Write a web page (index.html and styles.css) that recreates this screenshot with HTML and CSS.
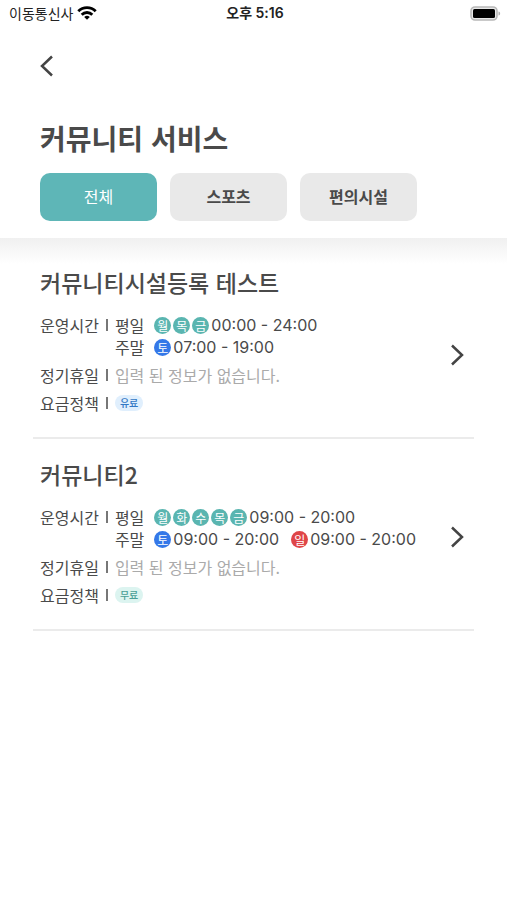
FILE: index.html
```html
<!DOCTYPE html>
<html lang="ko">
<head>
<meta charset="utf-8">
<meta name="viewport" content="width=device-width, initial-scale=1">
<title>커뮤니티 서비스</title>
<link rel="stylesheet" href="styles.css">
</head>
<body>
<div class="status">
  <div class="carrier">
    <span>이동통신사</span>
    <svg width="20" height="14" viewBox="0 0 20 14" aria-hidden="true">
      <g fill="none" stroke="#000" stroke-width="2.8">
        <path d="M1.300 5.200a12.300 12.300 0 0 1 17.400 0"/>
        <path d="M4.700 8.700a7.500 7.500 0 0 1 10.600 0"/>
      </g>
      <path d="M7.200 11a4.100 4.100 0 0 1 5.600 0L10 13.800z"/>
    </svg>
  </div>
  <div class="clock">오후 5:16</div>
  <svg class="battery" width="31" height="15" viewBox="0 0 31 15" aria-hidden="true">
    <rect x="1" y="1" width="26" height="13" rx="4" fill="#e8e8e8" stroke="#b8b8b8" stroke-width="1.600"/>
    <rect x="3" y="3" width="22" height="9" rx="1.500"/>
    <path d="M28.500 5.500c2.200.6 2.200 3.400 0 4z" fill="#b0b0b0"/>
  </svg>
</div>

<header class="header">
  <button class="back" type="button" aria-label="뒤로">
    <svg width="14" height="22" viewBox="0 0 14 22" aria-hidden="true"><path d="M12 1.500 2 11l10 9.500"/></svg>
  </button>
  <h1>커뮤니티 서비스</h1>
  <nav class="tabs">
    <button class="tab active" type="button">전체</button>
    <button class="tab" type="button">스포츠</button>
    <button class="tab" type="button">편의시설</button>
  </nav>
</header>

<main class="list">
  <article class="card">
    <div class="info">
      <h2>커뮤니티시설등록 테스트</h2>
      <dl>
        <dt>운영시간</dt>
        <dd>
          <div class="line"><span class="kind">평일</span><i class="day">월</i><i class="day">목</i><i class="day">금</i><span class="time">00:00 - 24:00</span></div>
          <div class="line"><span class="kind">주말</span><i class="day sat">토</i><span class="time">07:00 - 19:00</span></div>
        </dd>
        <dt>정기휴일</dt>
        <dd class="empty">입력 된 정보가 없습니다.</dd>
        <dt>요금정책</dt>
        <dd class="line"><span class="fee paid">유료</span></dd>
      </dl>
    </div>
    <a class="more first" href="#" aria-label="커뮤니티시설등록 테스트">
      <svg width="14" height="22" viewBox="0 0 14 22" aria-hidden="true"><path d="m2 1.500 10 9.500-10 9.500"/></svg>
    </a>
  </article>

  <article class="card">
    <div class="info">
      <h2>커뮤니티2</h2>
      <dl>
        <dt>운영시간</dt>
        <dd>
          <div class="line"><span class="kind">평일</span><i class="day">월</i><i class="day">화</i><i class="day">수</i><i class="day">목</i><i class="day">금</i><span class="time">09:00 - 20:00</span></div>
          <div class="line"><span class="kind">주말</span><i class="day sat">토</i><span class="time">09:00 - 20:00</span><i class="day sun">일</i><span class="time">09:00 - 20:00</span></div>
        </dd>
        <dt>정기휴일</dt>
        <dd class="empty">입력 된 정보가 없습니다.</dd>
        <dt>요금정책</dt>
        <dd class="line"><span class="fee free">무료</span></dd>
      </dl>
    </div>
    <a class="more" href="#" aria-label="커뮤니티2">
      <svg width="14" height="22" viewBox="0 0 14 22" aria-hidden="true"><path d="m2 1.500 10 9.500-10 9.500"/></svg>
    </a>
  </article>
</main>
</body>
</html>
```
FILE: styles.css
```css
* { box-sizing: border-box; }

body {
  margin: 0;
  background: #fff;
  color: #4a4a4a;
  font-family: "Noto Sans CJK KR", sans-serif;
  font-size: 16px;
  line-height: 22px;
}

h1, h2, dl, dd { margin: 0; }

button { font: inherit; color: inherit; border: 0; cursor: pointer; }

svg { display: block; }

.status {
  display: grid;
  grid-template-columns: 1fr auto 1fr;
  align-items: center;
  height: 26px;
  padding: 0 6px 0 9px;
  color: #222;
  font-size: 14px;
}

.carrier { display: flex; align-items: center; gap: 4px; }

.clock { font-family: Inter, "Noto Sans CJK KR", sans-serif; font-weight: 600; }

.battery { justify-self: end; }

.header { padding: 29px 40px 17px; }

.back { display: block; padding: 0; background: none; }

.back path, .more path { fill: none; stroke: #444; stroke-width: 2.5; }

h1 {
  margin: 40px 0 14px;
  font-size: 28px;
  line-height: 42px;
  font-weight: 700;
}

.tabs { display: flex; gap: 13px; }

.tab {
  width: 117px;
  height: 48px;
  padding: 0 0 2px;
  border-radius: 10px;
  background: #e9e9e9;
  font-weight: 700;
}

.tab.active { background: #5eb6b7; color: #fff; font-weight: 400; }

.list {
  padding: 9px 33px 0;
  background: linear-gradient(#f0f0f0, #fff) no-repeat 0 0 / 100% 26px;
}

.card {
  display: flex;
  align-items: center;
  justify-content: space-between;
  padding: 19px 10px 23px 7px;
  border-bottom: 2px solid #ebebeb;
}

h2 {
  margin-bottom: 15px;
  font-size: 23px;
  line-height: 33px;
  font-weight: 500;
}

dl {
  display: grid;
  grid-template-columns: auto 1fr;
  gap: 6px 7px;
}

dt { display: flex; align-items: center; gap: 7px; height: 22px; }

dt::after { content: ""; width: 2px; height: 12px; background: #777; }

.line { display: flex; align-items: center; height: 22px; gap: 2px; }

.kind { margin-right: 8px; }

.day {
  width: 17px;
  height: 17px;
  border-radius: 50%;
  background: #5ab5b0;
  color: #fff;
  font-size: 12px;
  line-height: 17px;
  font-style: normal;
  text-align: center;
}

.sat { background: #3478e8; }

.sun { background: #df4548; }

.time { font-family: Inter, "Noto Sans CJK KR", sans-serif; white-space: nowrap; }

.time + .day { margin-left: 10px; }

.empty { color: #aaa; }

.fee {
  padding: 0 5px;
  border-radius: 8px;
  font-size: 10px;
  line-height: 16px;
  font-weight: 500;
}

.paid { background: #e0effd; color: #3277c4; }

.free { background: #dcf4f0; color: #4a9f96; }

.more { padding-top: 10px; }

.more.first { padding-top: 30px; }
```
